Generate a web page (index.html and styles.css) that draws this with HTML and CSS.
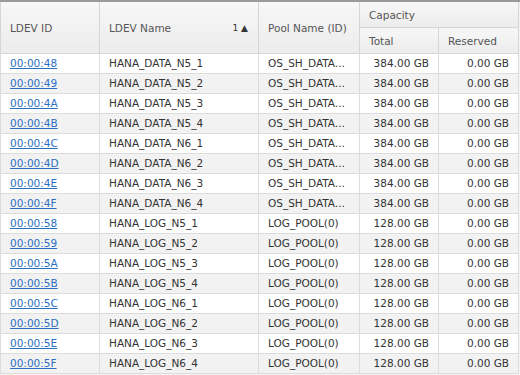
FILE: index.html
```html
<!DOCTYPE html>
<html>
<head>
<meta charset="utf-8">
<link rel="stylesheet" href="styles.css">
</head>
<body>
<div class="wrap">
<table class="grid">
  <colgroup>
    <col class="c1"><col class="c2"><col class="c3"><col class="c4"><col class="c5">
  </colgroup>
  <thead>
    <tr class="h1">
      <th rowspan="2">LDEV ID</th>
      <th rowspan="2"><div class="sorth"><span>LDEV Name</span><span class="sort">1 &#9650;</span></div></th>
      <th rowspan="2">Pool Name (ID)</th>
      <th colspan="2" class="cap">Capacity</th>
    </tr>
    <tr class="h2">
      <th>Total</th>
      <th>Reserved</th>
    </tr>
  </thead>
  <tbody>
    <tr><td><a href="#">00:00:48</a></td><td>HANA_DATA_N5_1</td><td>OS_SH_DATA...</td><td class="n">384.00 GB</td><td class="n">0.00 GB</td></tr>
    <tr><td><a href="#">00:00:49</a></td><td>HANA_DATA_N5_2</td><td>OS_SH_DATA...</td><td class="n">384.00 GB</td><td class="n">0.00 GB</td></tr>
    <tr><td><a href="#">00:00:4A</a></td><td>HANA_DATA_N5_3</td><td>OS_SH_DATA...</td><td class="n">384.00 GB</td><td class="n">0.00 GB</td></tr>
    <tr><td><a href="#">00:00:4B</a></td><td>HANA_DATA_N5_4</td><td>OS_SH_DATA...</td><td class="n">384.00 GB</td><td class="n">0.00 GB</td></tr>
    <tr><td><a href="#">00:00:4C</a></td><td>HANA_DATA_N6_1</td><td>OS_SH_DATA...</td><td class="n">384.00 GB</td><td class="n">0.00 GB</td></tr>
    <tr><td><a href="#">00:00:4D</a></td><td>HANA_DATA_N6_2</td><td>OS_SH_DATA...</td><td class="n">384.00 GB</td><td class="n">0.00 GB</td></tr>
    <tr><td><a href="#">00:00:4E</a></td><td>HANA_DATA_N6_3</td><td>OS_SH_DATA...</td><td class="n">384.00 GB</td><td class="n">0.00 GB</td></tr>
    <tr><td><a href="#">00:00:4F</a></td><td>HANA_DATA_N6_4</td><td>OS_SH_DATA...</td><td class="n">384.00 GB</td><td class="n">0.00 GB</td></tr>
    <tr><td><a href="#">00:00:58</a></td><td>HANA_LOG_N5_1</td><td>LOG_POOL(0)</td><td class="n">128.00 GB</td><td class="n">0.00 GB</td></tr>
    <tr><td><a href="#">00:00:59</a></td><td>HANA_LOG_N5_2</td><td>LOG_POOL(0)</td><td class="n">128.00 GB</td><td class="n">0.00 GB</td></tr>
    <tr><td><a href="#">00:00:5A</a></td><td>HANA_LOG_N5_3</td><td>LOG_POOL(0)</td><td class="n">128.00 GB</td><td class="n">0.00 GB</td></tr>
    <tr><td><a href="#">00:00:5B</a></td><td>HANA_LOG_N5_4</td><td>LOG_POOL(0)</td><td class="n">128.00 GB</td><td class="n">0.00 GB</td></tr>
    <tr><td><a href="#">00:00:5C</a></td><td>HANA_LOG_N6_1</td><td>LOG_POOL(0)</td><td class="n">128.00 GB</td><td class="n">0.00 GB</td></tr>
    <tr><td><a href="#">00:00:5D</a></td><td>HANA_LOG_N6_2</td><td>LOG_POOL(0)</td><td class="n">128.00 GB</td><td class="n">0.00 GB</td></tr>
    <tr><td><a href="#">00:00:5E</a></td><td>HANA_LOG_N6_3</td><td>LOG_POOL(0)</td><td class="n">128.00 GB</td><td class="n">0.00 GB</td></tr>
    <tr><td><a href="#">00:00:5F</a></td><td>HANA_LOG_N6_4</td><td>LOG_POOL(0)</td><td class="n">128.00 GB</td><td class="n">0.00 GB</td></tr>
  </tbody>
</table>
</div>
</body>
</html>
```
FILE: styles.css
```css
html, body {
  margin: 0;
  padding: 0;
  background: #ffffff;
}
.wrap {
  width: 520px;
  height: 375px;
  overflow: hidden;
  border-top: 2px solid #9a9a9a;
  box-sizing: border-box;
  background: #f4f4f4;
}
.grid {
  border-collapse: collapse;
  table-layout: fixed;
  width: 518px;
  font-family: "DejaVu Sans", Verdana, sans-serif;
  font-size: 10.5px;
  color: #333333;
  background: #ffffff;
}
.c1 { width: 99px; }
.c2 { width: 159px; }
.c3 { width: 101px; }
.c4 { width: 79px; }
.c5 { width: 80px; }
th {
  font-weight: normal;
  text-align: left;
  color: #555555;
  background: linear-gradient(#f7f7f7, #ececec);
  border: 1px solid #d6d6d6;
  border-top: none;
  padding: 0 9px;
  white-space: nowrap;
}
.h1 th { height: 25px; }
.h2 th { height: 25px; }
.cap { vertical-align: middle; }
.sorth {
  display: flex;
  justify-content: space-between;
  align-items: center;
}
.sort {
  font-size: 9px;
  color: #333;
  margin-right: 1px;
}
td {
  height: 19px;
  padding: 0 9px;
  border: 1px solid #dcdcdc;
  white-space: nowrap;
  overflow: hidden;
  line-height: 19px;
}
tbody tr:nth-child(even) td { background: #f2f2f2; }
td.n { text-align: right; }
a {
  color: #2b6fc2;
  text-decoration: underline;
}
```
